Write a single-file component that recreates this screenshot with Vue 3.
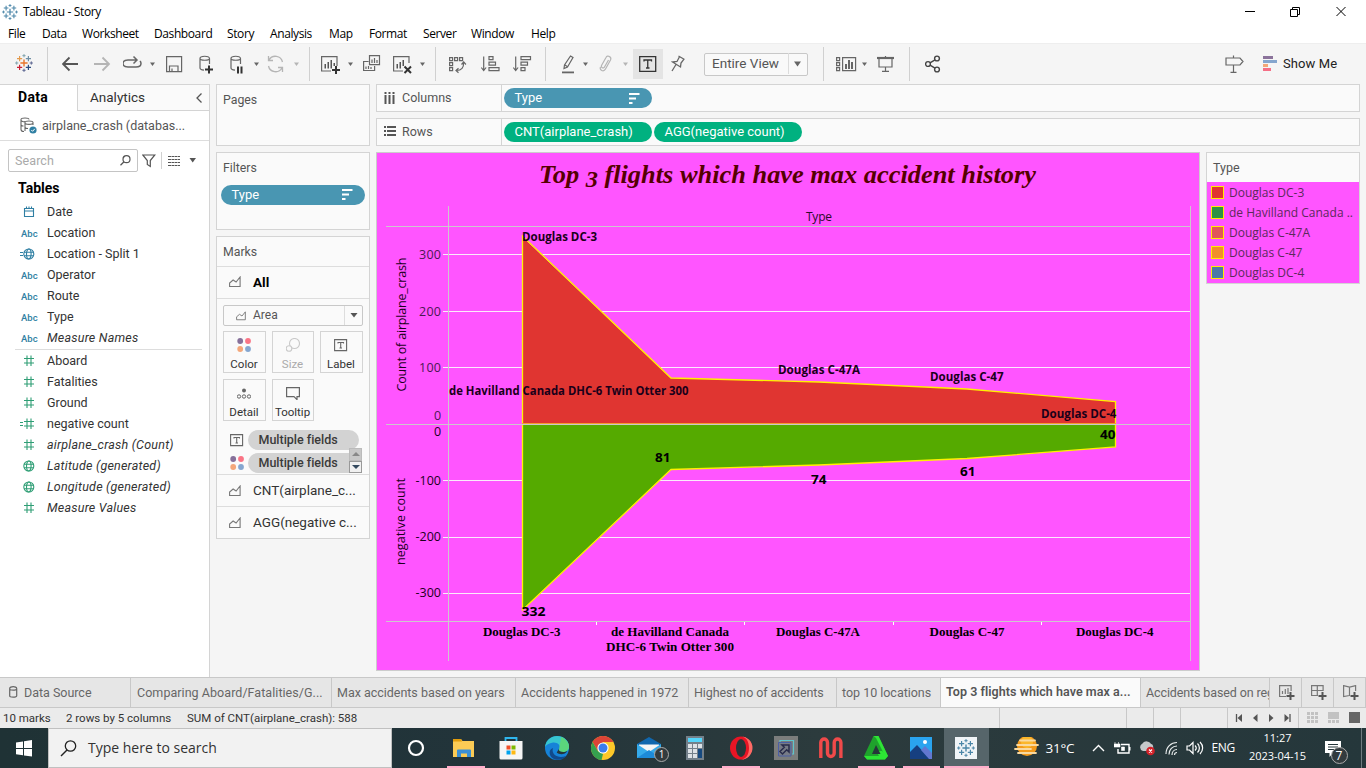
<script setup>
const plus = (x, y, r, c, w = 1.2) =>
  `<path d="M${x - r} ${y}H${x + r}M${x} ${y - r}V${y + r}" stroke="${c}" stroke-width="${w}" fill="none"/>`

const tableau = (c) =>
  plus(9, 9, 3.6, c[0], 1.4) + plus(4.6, 4.6, 2.6, c[1]) + plus(13.4, 4.6, 2.6, c[2]) +
  plus(4.6, 13.4, 2.6, c[3]) + plus(13.4, 13.4, 2.6, c[4]) + plus(9, 1.7, 1.6, c[5], 1) +
  plus(9, 16.3, 1.6, c[6], 1) + plus(1.7, 9, 1.6, c[5], 1) + plus(16.3, 9, 1.6, c[6], 1)

const blue = Array(7).fill('#4b86a8')
const g = (inner, c = '#666', w = 1.2) => `<g fill="none" stroke="${c}" stroke-width="${w}">${inner}</g>`
const bigPlus = (x, y) => plus(x, y, 4, '#333', 2)

const caretBody = '<path d="M0 8.5h5l-2.5 3.5z" fill="#666"/>'
const caretDim = '<path d="M0 8.5h5l-2.5 3.5z" fill="#b5b5b5"/>'
const cyl = '<path d="M10.500 10V4.500C10.500 1.500 1 1.500 1 4.500V14c0 1.500 2 2 4 2.200M1 4.500c0 2.300 9.500 2.300 9.500 0"/>'

const toolbar = [
  { k: 'icon', w: 18, b: tableau(['#e8762c', '#e39a4d', '#6f8fa5', '#c72035', '#2c4c80', '#7fa3ad', '#5c6692']) },
  { k: 'sep' },
  { k: 'icon', w: 18, b: g('<path d="M16 10H1M7.500 3.500L1 10l6.500 6.500"/>', '#555', 1.8) },
  { k: 'icon', w: 18, b: g('<path d="M0 10h15M8.500 3.500L15 10l-6.500 6.500"/>', '#b5b5b5', 1.8) },
  { k: 'icon', w: 20, b: g('<path d="M14 6H5C1 6 0 8 0 9.500S1 13 5 13h8c4 0 5-1.500 5-3.500 0-1-.3-1.800-1-2.500M10.500 2.500L14 6l-3.500 3.500"/>', '#666', 1.5) },
  { k: 'icon', w: 6, b: caretBody },
  { k: 'icon', w: 18, b: g('<path d="M.6 2.600h15v15H.6zM3.500 17v-5h8.500v5M6 17v-2.500"/>') },
  { k: 'icon', w: 16, b: g(cyl) + bigPlus(10, 15.5) },
  { k: 'icon', w: 16, b: g(cyl) + '<path d="M7 12.500h2v7H7zM10.500 12.500h2v7h-2z" fill="#333"/>' },
  { k: 'icon', w: 6, b: caretBody },
  { k: 'icon', w: 18, b: g('<path d="M15.500 8A7.300 7.300 0 0 0 2 6M1.500 12A7.300 7.300 0 0 0 15 14M1.500 2v4.500H6M15.500 18v-4.500H11"/>', '#b5b5b5', 1.3) },
  { k: 'icon', w: 6, b: caretDim },
  { k: 'sep' },
  { k: 'icon', w: 20, b: g('<path d="M10 17H.6V2.600h15.400V12"/>') + '<path d="M3.500 10h1.500v4.500H3.500zM6.500 8H8v6.500H6.500zM9.500 6H11v8.500H9.500zM12.500 9H14v3h-1.500z" fill="#555"/>' + bigPlus(15, 16) },
  { k: 'icon', w: 6, b: caretBody },
  { k: 'icon', w: 18, b: g('<path d="M5.600 7.500H.6v9h11v-4.500M6.500 1.600h10v9h-10zM9 9V5.500M11.500 9V4M14 9V6M3 15v-2.500M5.500 15v-3M8 15v-2"/>') },
  { k: 'icon', w: 20, b: g('<path d="M10 17H.6V2.600h15.400V9"/>') + '<path d="M3.500 10h1.500v4.500H3.500zM6.500 8H8v6.500H6.500zM9.500 6H11v6H9.500z" fill="#555"/>' + g('<path d="M11.500 12.500l6.500 6.500M18 12.500L11.500 19"/>', '#333', 2) },
  { k: 'icon', w: 6, b: caretBody },
  { k: 'sep' },
  { k: 'icon', w: 18, b: g('<path d="M.6 3.600h3v3h-3zM5.600 3.600h3v3h-3zM10.600 3.600h3v3h-3zM.6 8.600h3v3h-3zM.6 13.600h3v3h-3zM14.500 8.500c.5 5-2 8-7 8M12.500 10.500l2.200-2.500 2.200 2.500M9.500 14.200L7 16.500l2.500 2.200"/>') },
  { k: 'icon', w: 19, b: g('<path d="M2.700 2.500V16M.3 13.500l2.400 3 2.400-3M8 2.600h4v3H8zM8 8.100h6.500v3H8zM8 13.600h10v3H8z"/>') },
  { k: 'icon', w: 19, b: g('<path d="M2.700 2.500V16M.3 13.500l2.400 3 2.400-3M8 2.600h9.500v3H8zM8 8.100h6.500v3H8zM8 13.600h4v3H8z"/>') },
  { k: 'sep' },
  { k: 'icon', w: 14, b: g('<path d="M9.500 2l2.500 1.500L6.500 13 3 14.500 3.500 11zM4 11l2.500 1.800"/>') + '<path d="M1 17.500h12v1.800H1z" fill="#666"/>' },
  { k: 'icon', w: 6, b: caretBody },
  { k: 'icon', w: 14, b: g('<path d="M9.500 6l-4 7c-1 2-4 .5-3-1.500L7 3.500c1.500-3 6-.5 4.500 2.500l-5 9c-2 3.500-6.500 1-5-2"/>', '#b5b5b5') },
  { k: 'icon', w: 6, b: caretDim },
  { k: 'on', w: 18, b: g('<path d="M.7 2.700h16v14.600h-16zM5 7.500V6h7.500v1.500M8.750 6v8M7 14h3.500"/>', '#333', 1.3) },
  { k: 'icon', w: 16, b: g('<path d="M7.500 2l6 3.500M8.500 2.700L6 7.500 1.500 8l8 5 .5-4 3-3.800M5 10.500L1 17"/>', '#666', 1.3) },
  { k: 'select' },
  { k: 'sep' },
  { k: 'icon', w: 21, b: g('<path d="M.6 3.600h3v3h-3zM.6 8.600h3v3h-3zM.6 13.600h3v3h-3zM6.600 3.600h13v13h-13z"/>') + '<path d="M9 10h2v5H9zM12 6h2v9h-2zM15 8h2v7h-2z" fill="#666"/>' },
  { k: 'icon', w: 6, b: caretBody },
  { k: 'icon', w: 18, b: g('<path d="M0 4h17" stroke-width="2.200"/><path d="M2 4v9h13V4M8.500 2v2M8.500 13v4M5 17.400h7"/>') },
  { k: 'sep' },
  { k: 'icon', w: 17, b: g('<circle cx="3" cy="10" r="2.400"/><circle cx="12" cy="4.500" r="2.400"/><circle cx="12" cy="15.500" r="2.400"/><path d="M5 8.800l5-3M5 11.200l5 3"/>', '#444', 1.4) },
  { k: 'icon', w: 20, b: g('<path d="M1 4h14l3 3.500-3 3.500H1zM8.500 1.500V4M8.500 11v7M5.500 18.400h6"/>') },
  { k: 'icon', w: 16, b: '<path d="M0 2h10v3H0z" fill="#8b739b"/><path d="M0 6h14v3H0z" fill="#85a6ce"/><path d="M0 10h5v3H0z" fill="#f2a778"/><path d="M0 14h8v3H0z" fill="#f56f86"/>' },
  { k: 'showme' },
]

const menus = ['File', 'Data', 'Worksheet', 'Dashboard', 'Story', 'Analysis', 'Map', 'Format', 'Server', 'Window', 'Help']

const dimensions = [
  { n: 'Date', i: 'cal' }, { n: 'Location', i: 'abc' }, { n: 'Location - Split 1', i: 'globe', calc: true },
  { n: 'Operator', i: 'abc' }, { n: 'Route', i: 'abc' }, { n: 'Type', i: 'abc' }, { n: 'Measure Names', i: 'abc', it: true },
]
const measures = [
  { n: 'Aboard', i: 'hash' }, { n: 'Fatalities', i: 'hash' }, { n: 'Ground', i: 'hash' },
  { n: 'negative count', i: 'hash', calc: true }, { n: 'airplane_crash (Count)', i: 'hash', it: true },
  { n: 'Latitude (generated)', i: 'globe', it: true }, { n: 'Longitude (generated)', i: 'globe', it: true },
  { n: 'Measure Values', i: 'hash', it: true },
]
const glyph = {
  cal: '<path d="M4.500 3.500h9v8h-9zM4.500 6h9M6.500 1.500v2M9 1.500v2M11.500 1.500v2"/>',
  hash: '<path d="M4 4.500h10M4 9h10M7 1.500v10.500M11 1.500v10.500"/>',
  globe: '<circle cx="8.800" cy="7" r="5"/><ellipse cx="8.800" cy="7" rx="2.300" ry="5"/><path d="M4 5.300h9.600M4 8.700h9.600"/>',
}
const fieldGroups = [{ c: 'dim', rows: dimensions }, { c: 'mea', rows: measures }]

const areaIcon = g('<path d="M.6 10.500V7l3.500-3 3 2 4-5v9.500z"/>', '#777', 1.1)
const dots = '<circle cx="3.200" cy="3" r="2.900" fill="#86709a"/><circle cx="11" cy="3" r="2.900" fill="#fa7485"/><circle cx="3.200" cy="11" r="2.900" fill="#f4a77a"/><circle cx="11" cy="11" r="2.900" fill="#85a6d0"/>'
const tBox = g('<path d="M.6 1.600h12v11H.6zM4 5.500V4.500h5.500v1M6.700 4.500v5.500M5.500 10h2.500"/>', '#666', 1.1)
const markButtons = [
  { n: 'Color', b: dots },
  { n: 'Size', b: g('<circle cx="8.500" cy="5.500" r="5"/><circle cx="3" cy="10.500" r="2.800" fill="#fafafa"/>', '#c9c9c9', 1.1), dim: true },
  { n: 'Label', b: tBox },
  { n: 'Detail', b: '<circle cx="7" cy="4.500" r="2" fill="#666"/>' + g('<circle cx="2" cy="10.500" r="1.700"/><circle cx="7" cy="10.500" r="1.700"/><circle cx="12" cy="10.500" r="1.700"/>', '#666', 1) },
  { n: 'Tooltip', b: g('<path d="M.6 1.600h12.800v9H11v3L8 10.600H.6z"/>', '#666', 1.2) },
]

const legend = [
  { n: 'Douglas DC-3', c: 'c1' }, { n: 'de Havilland Canada ..', c: 'c2' }, { n: 'Douglas C-47A', c: 'c3' },
  { n: 'Douglas C-47', c: 'c4' }, { n: 'Douglas DC-4', c: 'c5' },
]

const grid = [254.5, 311.5, 367.5, 480.5, 537.5, 593.5]
const axis = [
  ['300', 259, 22], ['200', 316, 22], ['100', 372, 22], ['0', 420, 7], ['0', 436, 7],
  ['-100', 485, 25.5], ['-200', 541, 25.5], ['-300', 597, 25.5],
]
const marks = [
  ['Douglas DC-3', 522, 241, 75], ['de Havilland Canada DHC-6 Twin Otter 300', 449, 395, 239.5],
  ['Douglas C-47A', 778, 374, 82], ['Douglas C-47', 930, 381, 73.5], ['Douglas DC-4', 1041, 418, 75.5],
]
const counts = [['332', 521.5, 616, 24], ['81', 655, 462, 15.5], ['74', 811, 484, 15.5], ['61', 960, 476, 15.5], ['40', 1100, 439, 15.5]]
const cats = [
  ['Douglas DC-3', 483, 636, 77.5], ['de Havilland Canada', 611, 636, 118], ['DHC-6 Twin Otter 300', 606, 651, 128],
  ['Douglas C-47A', 776, 636, 84], ['Douglas C-47', 929.5, 636, 75], ['Douglas DC-4', 1076, 636, 77.5],
]

const tabs = [
  { n: 'Data Source', src: true }, { n: 'Comparing Aboard/Fatalities/G...' }, { n: 'Max accidents based on years' },
  { n: 'Accidents happened in 1972' }, { n: 'Highest no of accidents' }, { n: 'top 10 locations' },
  { n: 'Top 3 flights which have max a...', on: true }, { n: 'Accidents based on reg' },
]
const newTabs = [
  g('<path d="M7 11.500H.6V.6h11.500V6M3.500 9V6M6.300 9V4M9 9V3"/>', '#777') + plus(11.5, 11, 4, '#555', 2),
  g('<path d="M7 10.500H.6V.6h11.500V6M6.300 .6v10M.6 5.500h11.500"/>', '#777') + plus(11.5, 11, 4, '#555', 2),
  g('<path d="M6.500 10.500L.6 11.500V.6l6 1.500 6-1.500V6M6.500 2v9"/>', '#777') + plus(11.5, 11, 4, '#555', 2),
]

const apps = [
  { b: '<circle cx="12" cy="12" r="7" fill="none" stroke="#fff" stroke-width="2.200"/>' },
  { u: true, b: '<path d="M1 3h8l1.500 2H22v16H1z" fill="#fbcb55"/><path d="M1 3h8l1 2.500H1z" fill="#e19c0c"/><path d="M5 21v-6.500a1 1 0 0 1 1-1h12a1 1 0 0 1 1 1V21h-4v-3.500H9V21z" fill="#3a8fd6"/>' },
  { b: '<path d="M6.500 5.500V2h11v3.500" fill="none" stroke="#2fb6ee" stroke-width="1.800"/><path d="M.5 5h23v17a1.500 1.500 0 0 1-1.500 1.500H2A1.500 1.500 0 0 1 .5 22z" fill="#f5f5f5"/><path d="M7.500 9.500h4v4h-4z" fill="#f04e28"/><path d="M12.500 9.500h4v4h-4z" fill="#7db900"/><path d="M7.500 14.500h4v4h-4z" fill="#00a3ee"/><path d="M12.500 14.500h4v4h-4z" fill="#fdb813"/>' },
  { b: '<circle cx="12" cy="12" r="12" fill="#1683d8"/><path d="M0 11C1 4 6 0 12 0c7 0 12 5 12 10.500 0 4-3 5.500-6 5.500-3 0-5-1-3.500-3.500C16 9 12 6 8 6.500 4 7 1 9 0 11z" fill="#37c6d0"/><path d="M16 1c5 2 8 6 8 9.500 0 4-3 5.500-6 5.500-2 0-4-.5-4-2z" fill="#5bd67c"/><path d="M8 12c-2 6 4 11 13 8-3 4-9 5-13 2.500C3 19 4 13 8 12z" fill="#114a8c"/><path d="M14.200 12.500c-.8 1.500 0 3.300 4 3.500 1.500 0 3-.5 4-1-2 4-8 4-10.500 1.500z" fill="#25363a"/>' },
  { b: '<circle cx="12" cy="12" r="12" fill="#fdc829"/><path d="M1.600 6A12 12 0 0 1 22.400 6H12l-5.200 9z" fill="#dc4437"/><path d="M1.600 6L6.800 15 12 18l-1.500 6A12 12 0 0 1 1.600 6z" fill="#35a04f"/><circle cx="12" cy="12" r="5.600" fill="#fff"/><circle cx="12" cy="12" r="4.500" fill="#3b7ded"/>' },
  { badge: '1', b: '<path d="M0 8l12-7 12 7v14H0z" fill="#1067ae"/><path d="M2 8.500h20v8H2z" fill="#f5f5f5"/><path d="M0 8l12 8 12-8v14H0z" fill="#35aaea"/><path d="M0 22l12-8 12 8z" fill="#1d8ad8"/>' },
  { b: '<path d="M3 0h18v24H3z" fill="#73808a"/><path d="M5 2h14v4H5z" fill="#55d5fa"/><path d="M5 8h4v4H5zM10 8h4v4h-4zM15 8h4v4h-4zM5 13h4v4H5zM10 13h4v4h-4zM5 18h4v4H5zM10 18h4v4h-4z" fill="#dde2e6"/><path d="M15 13h4v9h-4z" fill="#164a80"/>' },
  { u: true, b: '<ellipse cx="12" cy="12" rx="11" ry="11.500" fill="#e81525"/><path d="M12 .5a11.500 11.500 0 0 1 0 23c5 0 8-5 8-11.500S17 .5 12 .5z" fill="#ff6b66"/><ellipse cx="12" cy="12" rx="5" ry="9" fill="#26373a"/>' },
  { b: '<path d="M0 0h24v24H0z" fill="#7b7d7c"/><path d="M6 6V4.500h13.500V18H18" fill="none" stroke="#60c4cc" stroke-width="1.200"/><path d="M4.500 6.500H17V20H4.500z" fill="#777b86" stroke="#4b5fa4"/><path d="M8 9h7v7l-2.300-2.300L8.500 18 6 15.500l4.300-4.200z" fill="none" stroke="#292c4b" stroke-width="1.500"/>' },
  { b: '<path d="M1.800 22V6.500c0-4.600 6.700-4.600 6.700 0V17c0 4.600 6.700 4.600 6.700 0V6.500c0-4.600 6.700-4.600 6.700 0V22" fill="none" stroke="#f04a4a" stroke-width="3.400"/>' },
  { u: true, b: '<path d="M9.500 0h5L24 20l-3 3.500H3L0 20z" fill="#1fa22c"/><path d="M9.500 0h5L24 20l-3 0L12 2z" fill="#2fe436"/><path d="M3 23.500L0 20h15l-3-5h6l6 5-3 3.500z" fill="#2ce534"/><path d="M12 9l4.500 9H8z" fill="#26373a"/>' },
  { u: true, b: '<path d="M1 1h22v22H1z" fill="#2aa4ef"/><path d="M1 16l7-7 13 14H1z" fill="#163f80"/><path d="M12 14l4-4 7 7v6h-3z" fill="#6377d0"/><circle cx="16" cy="6" r="2" fill="#fff"/>' },
  { u: true, on: true, b: '<path d="M1 1h22v22H1z" fill="#f0f4f7"/><g transform="translate(3 3)">' + tableau(blue) + '</g>' },
]
const trayIcons = [
  { w: 26, b: '<circle cx="13" cy="9" r="10" fill="#f39a1b"/><circle cx="13" cy="5" r="6" fill="#fbb72b"/><path d="M6 3.500h15M3 8h21M1 12h16M4 16h18" stroke="#f9d9a0" stroke-width="1.800" stroke-linecap="round"/>' },
  { temp: true },
  { w: 14, b: '<path d="M1 14l5.500-5.500L12 14" fill="none" stroke="#fff" stroke-width="1.400"/>' },
  { w: 17, b: '<path d="M7 7.500h8v8.500H4v-4M15.800 10v3.500" fill="none" stroke="#fff" stroke-width="1.400"/><path d="M7.500 10h3v3.500h-3zM0 7h6v3H0zM1 5v3M4.500 5v3" fill="#fff" stroke="#fff" stroke-width=".6"/>' },
  { w: 18, b: '<path d="M5 14a4 4 0 0 1-.5-7.500A5 5 0 0 1 13 7c3 0 3 7 0 7z" fill="#c5c9cb"/><circle cx="12.500" cy="14" r="4.300" fill="#d3222a"/><path d="M11 12.500l3 3M14 12.500l-3 3" stroke="#fff" stroke-width="1.200"/>' },
  { w: 14, b: '<path d="M1 17C1 10 6 5.500 12 5.500M4 17.500c0-5 3.500-8.500 8-8.500M7 18c0-3 2-5.500 5-5.500M9.500 18c0-1.500 1-2.500 2.500-2.500" fill="none" stroke="#e8ecec" stroke-width="1.200"/>' },
  { w: 18, b: '<path d="M1 9h2.500L7 5.500v11L3.500 13H1zM9 8.500c1.500 1.500 1.500 3.500 0 5M11.500 6.500c2.500 2.500 2.500 6.500 0 9M14 5c3.500 3.500 3.500 8.500 0 12" fill="none" stroke="#fff" stroke-width="1.200"/>' },
]
</script>

<template>
  <div class="app">
    <header class="titlebar">
      <svg class="tlogo" width="16" height="16" viewBox="0 0 18 18" v-html="tableau(blue)"></svg>
      <span class="ttext">Tableau - Story</span>
      <svg class="wincontrols" width="110" height="20" viewBox="0 0 110 20">
        <path d="M5 9.500h10M50.500 7.500h7v7h-7zM52.500 7V5.500h7v7H58M96.500 5l9 9M105.500 5l-9 9" fill="none" stroke="#000" />
      </svg>
    </header>
    <nav class="menubar"><span v-for="m in menus" :key="m">{{ m }}</span></nav>

    <div class="toolbar">
      <div v-for="(t, i) in toolbar" :key="i" class="tool" :class="t.k">
        <svg v-if="t.b" :width="t.w" height="20" :viewBox="`0 0 ${t.w} 20`" v-html="t.b"></svg>
        <template v-if="t.k === 'select'">
          <span>Entire View</span><i><svg width="8" height="6"><path d="M0 .5h7L3.500 5.500z" fill="#666" /></svg></i>
        </template>
        <span v-if="t.k === 'showme'">Show Me</span>
      </div>
    </div>

    <main class="work">
      <aside class="data">
        <div class="dtabs">
          <b>Data</b>
          <div class="an"><span>Analytics</span><svg width="8" height="12"><path d="M6.500 1.500L2 6l4.500 4.500" fill="none" stroke="#555" stroke-width="1.300" /></svg></div>
        </div>
        <div class="dsrc">
          <svg width="18" height="17" viewBox="0 0 18 17">
            <g fill="none" stroke="#666" stroke-width="1.100"><path d="M4 14.500c-2 0-3-1-3-2V2.500C1 .5 9 .5 9 2.500M1 3c0 1.500 3 2 4 1.500M1 7.500c0 1 1.500 1.500 2.500 1.500M5 14V5.500c0-2 8-2 8 0V8M5 6c0 1.800 8 1.800 8 0M5 10c0 1 2 1.500 3 1.500" /></g>
            <circle cx="13" cy="13" r="3.600" fill="#2f7fa3" /><path d="M11.300 13l1.300 1.300 2.200-2.500" fill="none" stroke="#fff" />
          </svg>
          <span>airplane_crash (databas...</span>
        </div>
        <div class="dfind">
          <div class="search"><span>Search</span><svg width="11" height="11"><circle cx="6.500" cy="4.200" r="3.500" fill="none" stroke="#555" stroke-width="1.200" /><path d="M4 6.800L.5 10.300" stroke="#555" stroke-width="1.300" /></svg></div>
          <svg width="14" height="14"><path d="M.8 1h12L8.300 6.500V12.500L5.300 10.500v-4z" fill="none" stroke="#555" stroke-width="1.200" /></svg>
          <i class="vsep"></i>
          <svg width="13" height="12"><path d="M0 1.500h3m.5 0h3m.5 0h2.500m.5 0h2M0 4.500h3m.5 0h3m.5 0h2.500m.5 0h2M0 7.500h3m.5 0h3m.5 0h2.500m.5 0h2M0 10.500h3m.5 0h3m.5 0h2.500m.5 0h2" stroke="#555" stroke-width="1.200" /></svg>
          <svg class="fcaret" width="8" height="5"><path d="M.5 0h6.500L3.700 4.500z" fill="#555" /></svg>
        </div>
        <h3>Tables</h3>
        <ul v-for="grp in fieldGroups" :key="grp.c" :class="grp.c">
          <li v-for="f in grp.rows" :key="f.n">
            <em v-if="f.i === 'abc'" class="abc">Abc</em>
            <svg v-else width="16" height="14">
              <g fill="none" stroke="currentColor" stroke-width="1.100" v-html="glyph[f.i]"></g>
              <path v-if="f.calc" d="M0 5.500h3M0 8.500h3" stroke="currentColor" />
            </svg>
            <span :class="{ it: f.it }">{{ f.n }}</span>
          </li>
        </ul>
      </aside>

      <section class="cards">
        <div class="card pages"><h4>Pages</h4></div>
        <div class="card filters">
          <h4>Filters</h4>
          <div class="pill blue"><span>Type</span><svg width="11" height="11"><path d="M0 1h10.500M0 5.500h7M0 10h3.500" stroke="#fff" stroke-width="1.800" /></svg></div>
        </div>
        <div class="card marks">
          <h4>Marks</h4>
          <div class="mrow all"><svg width="13" height="12" v-html="areaIcon"></svg><b>All</b></div>
          <div class="mbody">
            <div class="mselect"><svg width="11" height="10" viewBox="0 0 13 12" v-html="areaIcon"></svg><span>Area</span><i><svg width="8" height="5"><path d="M.5 0h7L4 4.500z" fill="#555" /></svg></i></div>
            <div class="mgrid">
              <div v-for="b in markButtons" :key="b.n" class="mbtn" :class="{ dim: b.dim }">
                <svg width="14" height="14" v-html="b.b"></svg><span>{{ b.n }}</span>
              </div>
            </div>
            <div class="mf"><svg width="14" height="14" v-html="tBox"></svg><span>Multiple fields</span></div>
            <div class="mf"><svg width="14" height="14" v-html="dots"></svg><span>Multiple fields</span></div>
            <div class="mscroll"><i class="up"><svg width="8" height="4"><path d="M0 4h8L4 0z" fill="#888" /></svg></i><i><svg width="8" height="4"><path d="M0 0h8L4 4z" fill="#34495e" /></svg></i></div>
          </div>
          <div class="mrow"><svg width="13" height="12" v-html="areaIcon"></svg><span>CNT(airplane_c...</span></div>
          <div class="mrow"><svg width="13" height="12" v-html="areaIcon"></svg><span>AGG(negative c...</span></div>
        </div>
      </section>

      <section class="center">
        <div class="shelf">
          <div class="sname"><svg width="12" height="12"><path d="M1.500 0v2M1.500 3v9M5.500 0v2M5.500 3v9M9.500 0v2M9.500 3v9" stroke="#555" stroke-width="2" /></svg><span>Columns</span></div>
          <div class="pill blue"><span>Type</span><svg width="11" height="11"><path d="M0 1h10.500M0 5.500h7M0 10h3.500" stroke="#fff" stroke-width="1.800" /></svg></div>
        </div>
        <div class="shelf">
          <div class="sname"><svg width="12" height="12"><path d="M0 1h2M3 1h9M0 5h2M3 5h9M0 9h2M3 9h9" stroke="#555" stroke-width="2" /></svg><span>Rows</span></div>
          <div class="pill green"><span>CNT(airplane_crash)</span></div>
          <div class="pill green"><span>AGG(negative count)</span></div>
        </div>
        <div class="views">
          <div class="viz">
            <svg width="822" height="517" viewBox="377 153 822 517">
              <text class="vt" x="539" y="183" textLength="497" lengthAdjust="spacingAndGlyphs">Top <tspan dy="4" font-size="24">3</tspan><tspan dy="-4"> flights which have max accident history</tspan></text>
              <path v-for="y in grid" :key="y" :d="`M443 ${y}H1190`" stroke="#fbeafb" />
              <path d="M522.500 424V237L671 378l148 4 148 7 148.500 12.500V424z" fill="#e03531" />
              <path d="M522.500 424V610L671 469.500l148-4.500 148-6.500 148.500-11.500V424z" fill="#55aa00" />
              <path d="M522.500 610V236L671 378l148 4 148 7 148.500 12.500v45.500L967 458.500l-148 6.500-148 4.500z" fill="none" stroke="#fff200" stroke-width="1.300" />
              <path d="M522 423.500H1116" stroke="#f0a030" />
              <g stroke="#cdc6cd"><path d="M448.500 206V661M1190.500 206V661M386 226.500H1190M386 424.500H1190M386 621.500H1190" /></g>
              <path d="M596.500 622v3M744.500 622v3M893.500 622v3M1041.500 622v3" stroke="#fff" />
              <text class="ax hd" x="806" y="221" textLength="26">Type</text>
              <text v-for="(a, i) in axis" :key="'a' + i" class="ax" :class="{ neg: i > 3 }" :x="441 - a[2]" :y="a[1]" :textLength="a[2]">{{ a[0] }}</text>
              <text class="ax neg" transform="translate(406 391.500) rotate(-90)" textLength="134">Count of airplane_crash</text>
              <text class="ax neg" transform="translate(405 565) rotate(-90)" textLength="87">negative count</text>
              <text v-for="m in marks" :key="m[0]" class="ml" :x="m[1]" :y="m[2]" :textLength="m[3]" lengthAdjust="spacingAndGlyphs">{{ m[0] }}</text>
              <text v-for="m in counts" :key="m[0]" class="mc" :x="m[1]" :y="m[2]" :textLength="m[3]" lengthAdjust="spacingAndGlyphs">{{ m[0] }}</text>
              <text v-for="m in cats" :key="m[0]" class="ct" :x="m[1]" :y="m[2]" :textLength="m[3]" lengthAdjust="spacingAndGlyphs">{{ m[0] }}</text>
            </svg>
          </div>
          <div class="legend">
            <h4>Type</h4>
            <div v-for="l in legend" :key="l.n" class="lrow"><i :class="l.c"></i><span>{{ l.n }}</span></div>
          </div>
        </div>
      </section>
    </main>

    <div class="tabs">
      <div v-for="t in tabs" :key="t.n" class="tab" :class="{ on: t.on }">
        <svg v-if="t.src" width="9" height="12"><path d="M.7 2.500v7.500c0 1.500 7 1.500 7 0V2.500C7.700 0 .7 0 .7 2.500zm0 .5c0 1.500 7 1.500 7 0" fill="none" stroke="#666" stroke-width="1.200" /></svg>
        <span>{{ t.n }}</span>
      </div>
      <div v-for="(n, i) in newTabs" :key="'n' + i" class="tab new"><svg width="17" height="16" v-html="n"></svg></div>
    </div>

    <div class="status">
      <span>10 marks</span><span>2 rows by 5 columns</span><span>SUM of CNT(airplane_crash): 588</span>
      <i></i><i></i><i></i><i></i>
      <div class="pager"><svg width="60" height="10"><path d="M2.500 1v8M56 1v8" stroke="#555" stroke-width="1.300" /><path d="M8 1v8L3.500 5zM23.500 1v8L19 5zM35 1v8l4.500-4zM50.500 1v8l4.500-4z" fill="#555" /></svg></div>
      <div class="modes">
        <svg width="56" height="12"><path d="M0 0h3v3H0zM4 0h3v3H4zM8 0h3v3H8zM0 4h3v3H0zM4 4h3v3H4zM8 4h3v3H8zM0 8h3v3H0zM4 8h3v3H4zM8 8h3v3H8zM21 0h11v7H21zM21 8h3v3h-3zM25 8h3v3h-3zM29 8h3v3h-3z" fill="#c2c2c2" /><path d="M42 0h11v11H42z" fill="#666" /></svg>
      </div>
    </div>

    <footer class="taskbar">
      <div class="start"><svg width="17" height="17"><path d="M0 2.500l7-1v6.500H0zM8 1.300L16 0v8H8zM0 9h7v6.300L0 14.300zM8 9h8v7.500L8 15.500z" fill="#fff" /></svg></div>
      <div class="tsearch"><svg width="17" height="17"><circle cx="10.500" cy="6" r="5.200" fill="none" stroke="#222" stroke-width="1.300" /><path d="M7 10L1 16" stroke="#222" stroke-width="1.400" /></svg><span>Type here to search</span></div>
      <div v-for="(a, i) in apps" :key="i" class="tapp" :class="{ on: a.on, u: a.u }">
        <svg width="24" height="24" v-html="a.b"></svg>
        <small v-if="a.badge" class="badge">{{ a.badge }}</small>
      </div>
      <div v-for="(t, i) in trayIcons" :key="'t' + i" class="tray">
        <span v-if="t.temp" class="temp">31°C</span>
        <svg v-else :width="t.w" height="22" v-html="t.b"></svg>
      </div>
      <div class="tray lang">ENG</div>
      <div class="clock"><span>11:27</span><span>2023-04-15</span></div>
      <div class="notif">
        <svg width="18" height="18"><path d="M0 1h16v12h-8l-3.500 4v-4H0z" fill="#fff" /><path d="M3 4.500h10M3 7h10M3 9.500h6" stroke="#25363a" /></svg>
        <small class="badge">7</small>
      </div>
      <div class="edge"></div>
    </footer>
  </div>
</template>

<style>
body { margin: 0; overflow: hidden; }
</style>

<style scoped>
* { box-sizing: border-box; }
.app { width: 1366px; height: 768px; display: flex; flex-direction: column; background: #f5f5f5; font: 12.5px/1.2 Roboto, sans-serif; color: #333; overflow: hidden; white-space: nowrap; }
svg { display: block; flex: none; }
h3, h4, ul { margin: 0; padding: 0; list-style: none; font-weight: 400; }
i, em { font-style: normal; }

.titlebar { height: 23px; background: #fff; display: flex; align-items: center; padding: 0 16px 0 2px; color: #000; font: 12px "Open Sans", sans-serif; letter-spacing: -0.37px; }
.ttext { margin-left: 5px; }
.wincontrols { margin-left: auto; }
.menubar { height: 20px; background: #fff; color: #000; padding: 2px 0 0 8px; display: grid; grid-template-columns: 34px 40px 72px 73px 43px 59px 40px 54px 48px 60px 40px; font: 12px/18px "Open Sans", sans-serif; letter-spacing: -0.4px; }

.toolbar { height: 41px; padding-left: 15px; border-top: 1px solid #eee; display: grid; align-items: center; grid-template-columns: 32px 15px 32px 29px 27px 16px 33px 31px 24px 13px 27px 15px 12px 27px 15px 30px 27px 15px 14px 32px 32px 32px 16px 22px 16px 24px 10px 38px 33px 119px 13px 26px 15px 32px 16px 300px 38px 20px 80px; }
.tool.sep { width: 1px; height: 34px; background: #d0d0d0; }
.tool.on { width: 30px; height: 30px; background: #e4e4e4; display: flex; align-items: center; justify-content: center; }
.tool.select { width: 104px; height: 23px; border: 1px solid #c8c8c8; border-radius: 2px; background: #f9f9f9; display: flex; align-items: center; padding-left: 7px; padding-bottom: 1px; font-size: 13.5px; color: #555; }
.tool.select i { margin-left: auto; width: 19px; height: 21px; border-left: 1px solid #dcdcdc; display: grid; place-items: center; }
.tool.showme { font-size: 13px; letter-spacing: .1px; color: #222; }

.work { height: 593px; display: flex; border-top: 0; }
.data { width: 210px; background: #fff; border-right: 1px solid #d4d4d4; border-top: 1px solid #d4d4d4; display: flex; flex-direction: column; }
.dtabs { display: flex; height: 26px; }
.dtabs b { width: 77px; padding: 4px 0 0 18px; font-size: 14px; letter-spacing: .3px; color: #000; }
.an { flex: 1; background: #fafafa; border-left: 1px solid #d4d4d4; border-bottom: 1px solid #d4d4d4; display: flex; justify-content: space-between; align-items: center; padding: 0 6px 0 12px; font-size: 13.5px; }
.dsrc { height: 30px; border-bottom: 1px solid #ddd; display: flex; align-items: center; gap: 3px; padding-left: 20px; color: #555; }
.dsrc span { margin-left: 1px; }
.dfind { margin-top: 8px; height: 23px; padding-left: 8px; display: flex; align-items: center; }
.search { width: 130px; height: 23px; border: 1px solid #c4c4c4; border-radius: 2px; display: flex; align-items: center; justify-content: space-between; padding: 0 6px; color: #aaa; margin-right: 4px; letter-spacing: .1px; }
.vsep { width: 1px; height: 17px; background: #d0d0d0; margin: 0 6px 0 5px; }
.fcaret { margin-left: 8px; }
.data h3 { font-weight: 700; font-size: 14px; color: #000; padding-left: 18px; line-height: 18px; margin: 7px 0 4px; }
.data li { height: 21px; display: flex; align-items: center; padding-left: 20px; }
.data li > span { margin-left: 11px; color: #333; }
.data li > .it { font-style: italic; letter-spacing: .22px; }
.dim { color: #2f7fa3; }
.mea { color: #2f9e75; }
ul.dim { margin-right: 7px; margin-left: 15px; border-bottom: 1px solid #ddd; padding-bottom: 1px; }
.data ul.dim { padding-bottom: 1px; }
.data ul.dim li { padding-left: 5px; }
.abc { width: 16px; font: 500 9.5px Roboto, sans-serif; padding-left: 1px; padding-top: 1px; letter-spacing: 0; }

.cards { width: 154px; margin-left: 6px; display: flex; flex-direction: column; gap: 6px; }
.card { background: #fafafa; border: 1px solid #d4d4d4; position: relative; }
.card h4 { color: #555; padding: 8px 0 0 6px; font-size: 12.3px; }
.pages { height: 62px; }
.filters { height: 78px; }
.filters .pill { margin: 9px 0 0 4px; width: 144px; }
.marks { height: 303px; }
.marks h4 { height: 30px; border-bottom: 1px solid #ddd; }
.pill { width: 148px; height: 20px; border-radius: 10px; color: #fff; font-size: 13px; display: flex; align-items: center; justify-content: space-between; padding: 0 12px 0 10.500px; }
.blue { background: #4996b2; }
.green { background: #00b180; }
.mrow { height: 32px; display: flex; align-items: center; padding-left: 12px; gap: 11px; border-top: 1px solid #ddd; font-size: 13.5px; }
.mrow.all { border-top: 0; border-bottom: 1px solid #ddd; color: #000; padding-bottom: 1px; }
.mbody { position: relative; height: 175px; padding: 6px 6px 0; }
.mselect { height: 21px; width: 140px; border: 1px solid #c8c8c8; border-radius: 2px; display: flex; align-items: center; padding-left: 12px; gap: 6px; color: #555; font-size: 12px; }
.mselect i { margin-left: auto; width: 18px; height: 19px; border-left: 1px solid #ddd; display: grid; place-items: center; }
.mgrid { margin-top: 5px; display: grid; grid-template-columns: 43px 42px 43px; gap: 6px; height: 90px; }
.mbtn { height: 42px; border: 1px solid #d4d4d4; display: flex; flex-direction: column; align-items: center; padding-top: 6px; padding-right: 1px; gap: 5px; font-size: 11.5px; color: #333; }
.mbtn span { line-height: 14px; }
.mbtn.dim { color: #aaa; }
.mf { display: flex; align-items: center; height: 20px; margin-bottom: 3px; padding-left: 7px; gap: 4px; }
.mgrid + .mf { margin-top: 9px; }
.mf span { width: 111px; height: 20px; border-radius: 10px; background: #d3d3d3; padding-left: 10.500px; line-height: 20px; font-weight: 500; letter-spacing: -.02px; color: #3a3a3a; }
.mscroll { position: absolute; right: 7px; bottom: 1px; width: 13px; height: 25px; display: flex; flex-direction: column; }
.mscroll i { flex: 1; border: 1px solid #999; background: #f0f0f0; display: grid; place-items: center; }
.mscroll .up { background: #c8c8c8; border-color: #bbb; }

.center { margin-left: 6px; flex: 1; display: flex; flex-direction: column; gap: 6px; }
.shelf { width: 984px; height: 28px; border: 1px solid #d4d4d4; background: #fafafa; display: flex; align-items: center; gap: 2px; }
.sname { width: 125px; height: 26px; border-right: 1px solid #d4d4d4; display: flex; align-items: center; padding-left: 7px; padding-bottom: 1px; gap: 6px; color: #555; }
.views { display: flex; gap: 6px; align-items: flex-start; }
.viz { width: 824px; height: 519px; border: 1px solid #ccc; background: #ff55ff; }
.vt { font: italic 700 26px "Liberation Serif", serif; fill: #550000; }
.ax { font: 12.5px "Open Sans", sans-serif; fill: #4a1a52; }
.neg { fill: #1c001c; }
.hd { font-size: 12px; fill: #2b0a2b; }
.ml { font: 700 12px "Open Sans", sans-serif; fill: #1a001a; }
.mc { font: 700 12.5px "Open Sans", sans-serif; fill: #000; }
.ct { font: 700 13px "Liberation Serif", serif; fill: #000; }
.legend { width: 154px; height: 132px; border: 1px solid #d4d4d4; background: #ff55ff; }
.legend h4 { height: 29px; background: #fafafa; padding: 7px 0 0 6px; color: #555; }
.lrow { height: 20px; display: flex; align-items: center; padding-left: 4px; font: 12px "Open Sans", sans-serif; color: #5b2a5b; }
.lrow i { width: 13px; height: 13px; border: 1px solid #ffee00; margin-right: 5px; }
.c1 { background: #e03531; } .c2 { background: #2f9144; } .c3 { background: #e15759; } .c4 { background: #f28e2b; } .c5 { background: #4e79a7; }

.tabs { height: 31px; display: grid; grid-template-columns: 131px 201px 184px 173px 148px 104px 200px 129px 32px 32px 32px; background: #e6e6e6; border-top: 1px solid #c8c8c8; border-bottom: 1px solid #c8c8c8; }
.tab { border-right: 1px solid #c8c8c8; display: flex; align-items: center; padding-left: 5px; color: #666; overflow: hidden; letter-spacing: -.02px; }
.tab:nth-child(2) { padding-left: 6px; letter-spacing: .05px; }
.tab:nth-child(5) { letter-spacing: -.1px; }
.tab:nth-child(8) { letter-spacing: -.12px; }
.tab:first-child { padding-left: 9px; gap: 6px; }
.tab:first-child svg { margin-top: -2px; }
.tab.on { background: #fafafa; font-weight: 600; color: #555; padding-bottom: 2px; letter-spacing: .05px; }
.tab.new { padding-left: 9px; }
.status { height: 20px; background: #ebebeb; display: grid; grid-template-columns: 63px 121px 812px 127px 27px 27px 47px 71px 68px; padding-left: 3px; align-items: center; font-size: 11.5px; color: #333; }
.status i { height: 20px; border-left: 1px solid #c8c8c8; }
.status > span { padding-top: 1px; }
.pager { height: 20px; border-left: 1px solid #c8c8c8; display: flex; align-items: center; padding-left: 6px; }
.modes { height: 20px; border-left: 1px solid #c8c8c8; display: flex; align-items: center; padding-left: 8px; }

.taskbar { height: 40px; background: linear-gradient(90deg, #1f3235, #22343a 35%, #2c3b3d 60%, #25373b); display: grid; color: #fff; font-family: "Open Sans", sans-serif; grid-template-columns: 48px 344px 48px 47.500px 46.500px 46px 46px 46px 46px 45.500px 45px 45px 45px 45px 45px 57px 46px 22px 24px 27px 21px 26px 33px 66px 50px 5px; }
.start { display: grid; place-items: center; }
.tsearch { background: #f2f2f2; border: 1px solid #c0c0c0; color: #333; font-size: 14px; display: flex; align-items: center; padding-left: 11px; gap: 11px; }
.tapp { position: relative; display: grid; place-items: center; }
.tapp.on { background: #56656a; }
.tapp.u::after { content: ""; position: absolute; left: 4px; right: 4px; bottom: 0; height: 2px; background: #ffaecb; }
.tapp:nth-child(4)::after { left: 7px; right: 3px; }
.tapp.on::after { left: 0; right: 0; }
.badge { position: absolute; left: 28px; top: 19px; width: 15px; height: 15px; border-radius: 8px; border: 1px solid #aaa; background: #333b3e; font-size: 10px; line-height: 13px; text-align: center; color: #fff; }
.tray { display: flex; align-items: center; }
.tray:nth-child(16) { padding-left: 25px; }
.temp { font-size: 13.5px; letter-spacing: -.2px; }
.lang { font-size: 12px; letter-spacing: -.4px; }
.clock { display: flex; flex-direction: column; align-items: center; font-size: 11px; line-height: 18px; padding-top: 1px; letter-spacing: -.05px; }
.notif { position: relative; padding: 12px 0 0 14px; }
.notif .badge { left: 20px; top: 19px; width: 17px; height: 17px; border-radius: 9px; line-height: 15px; font-size: 12px; }
.edge { border-left: 1px solid #6e7c80; }
</style>
